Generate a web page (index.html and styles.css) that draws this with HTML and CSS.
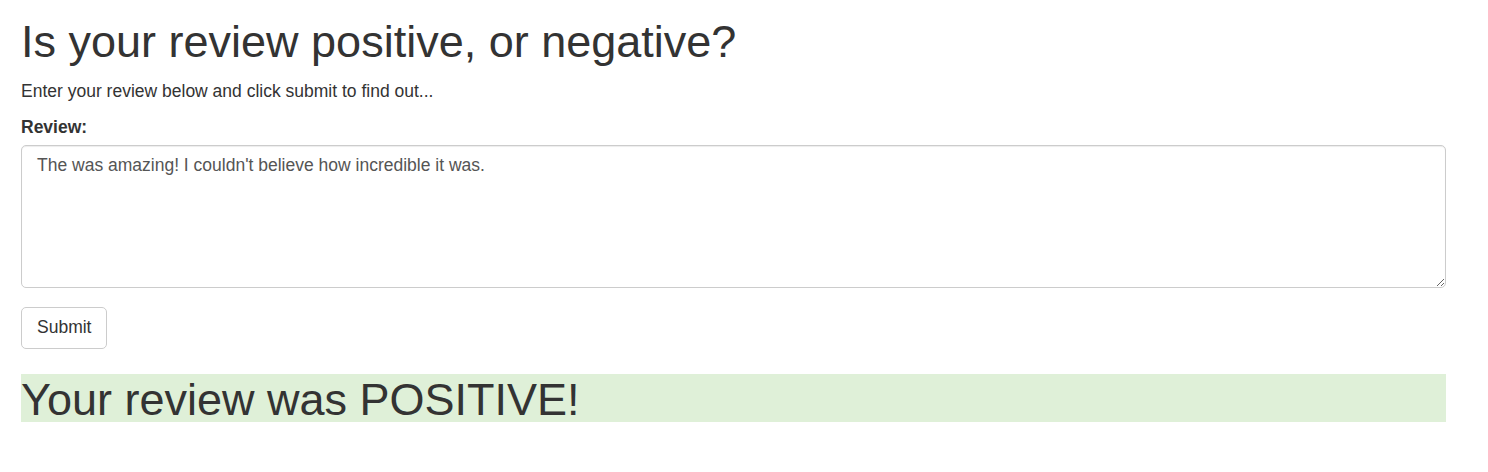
FILE: index.html
```html
<!DOCTYPE html>
<html lang="en">
<head>
<meta charset="utf-8">
<title>Review sentiment</title>
<link rel="stylesheet" href="styles.css">
</head>
<body>
<div class="container">
  <h1 class="title">Is your review positive, or negative?</h1>
  <p class="lead-text">Enter your review below and click submit to find out...</p>
  <form class="review-form">
    <div class="form-group">
      <label class="form-label" for="review">Review:</label>
      <textarea class="form-control" id="review" name="review">The was amazing! I couldn't believe how incredible it was.</textarea>
    </div>
    <button type="button" class="btn">Submit</button>
  </form>
  <h1 class="result">Your review was POSITIVE!</h1>
</div>
</body>
</html>
```

FILE: styles.css
```css
* { box-sizing: border-box; }
html, body { margin: 0; padding: 0; background: #fff; }
body {
  font-family: "Liberation Sans", Arial, Helvetica, sans-serif;
  font-size: 17.5px;
  line-height: 25px;
  color: #333;
}
.container {
  padding: 0 42px 0 21px;
}
.title {
  font-size: 45px;
  line-height: 49.5px;
  font-weight: 400;
  margin: 16.5px 0 12.5px;
}
.lead-text {
  margin: 0 0 11px;
}
.form-group {
  margin-bottom: 19px;
}
.form-label {
  display: inline-block;
  font-weight: 700;
  margin-bottom: 5.3px;
}
.form-control {
  display: block;
  width: 100%;
  height: 143px;
  padding: 7.5px 15px;
  font-family: inherit;
  font-size: 17.5px;
  line-height: 25px;
  color: #555;
  background: #fff;
  border: 1px solid #ccc;
  border-radius: 5px;
  box-shadow: inset 0 1px 1px rgba(0,0,0,.075);
  resize: vertical;
  margin: 0;
}
.btn {
  display: inline-block;
  margin: 0;
  padding: 7.5px 15px;
  font-family: inherit;
  font-size: 17.5px;
  line-height: 25px;
  color: #333;
  background: #fff;
  border: 1px solid #ccc;
  border-radius: 5px;
  cursor: pointer;
}
.result {
  font-size: 45px;
  line-height: 44px;
  padding-top: 4px;
  font-weight: 400;
  margin: 25px 0 0;
  background: #dff0d8;
}
```
